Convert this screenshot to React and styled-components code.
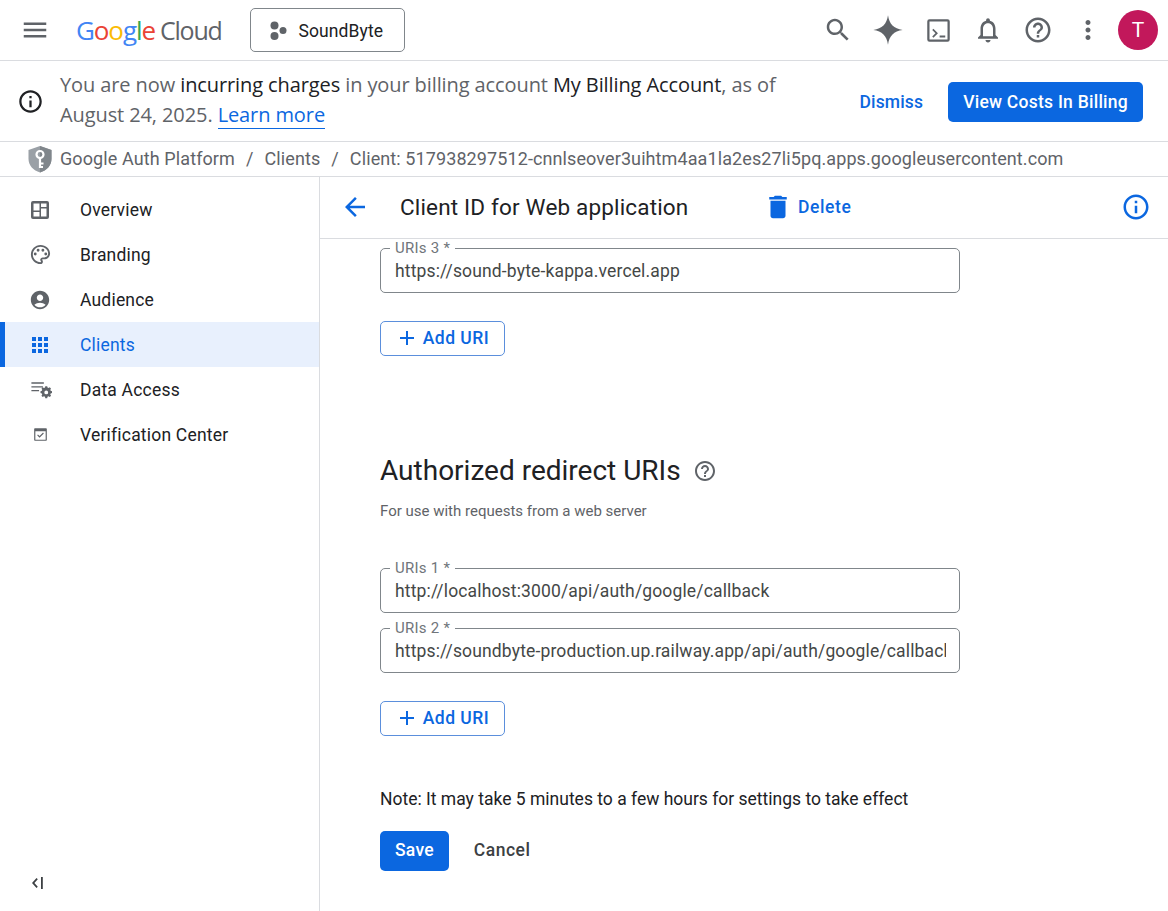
import React from 'react'
import styled, { createGlobalStyle } from 'styled-components'

const BLUE = '#0b67e0'

const paths = {
  menu: 'M3 18h18v-2H3v2zm0-5h18v-2H3v2zm0-7v2h18V6H3z',
  search: 'M15.5 14h-.79l-.28-.27C15.41 12.59 16 11.11 16 9.5 16 5.91 13.09 3 9.5 3S3 5.91 3 9.5 5.91 16 9.5 16c1.61 0 3.09-.59 4.23-1.57l.27.28v.79l5 4.99L20.49 19l-4.99-5zm-6 0C7.01 14 5 11.99 5 9.5S7.01 5 9.5 5 14 7.01 14 9.5 11.99 14 9.5 14z',
  bell: 'M12 22c1.1 0 2-.9 2-2h-4c0 1.1.9 2 2 2zm6-6v-5c0-3.07-1.63-5.64-4.5-6.32V4c0-.83-.67-1.5-1.5-1.5s-1.5.67-1.5 1.5v.68C7.64 5.36 6 7.92 6 11v5l-2 2v1h16v-1l-2-2zm-2 1H8v-6c0-2.48 1.51-4.5 4-4.5s4 2.02 4 4.5v6z',
  help: 'M11 18h2v-2h-2v2zm1-16C6.48 2 2 6.48 2 12s4.48 10 10 10 10-4.48 10-10S17.52 2 12 2zm0 18c-4.41 0-8-3.59-8-8s3.59-8 8-8 8 3.59 8 8-3.59 8-8 8zm0-14c-2.21 0-4 1.79-4 4h2c0-1.1.9-2 2-2s2 .9 2 2c0 2-3 1.75-3 5h2c0-2.25 3-2.5 3-5 0-2.21-1.79-4-4-4z',
  more: 'M12 8c1.1 0 2-.9 2-2s-.9-2-2-2-2 .9-2 2 .9 2 2 2zm0 2c-1.1 0-2 .9-2 2s.9 2 2 2 2-.9 2-2-.9-2-2-2zm0 6c-1.1 0-2 .9-2 2s.9 2 2 2 2-.9 2-2-.9-2-2-2z',
  info: 'M11 7h2v2h-2zm0 4h2v6h-2zm1-9C6.48 2 2 6.48 2 12s4.48 10 10 10 10-4.48 10-10S17.52 2 12 2zm0 18c-4.41 0-8-3.59-8-8s3.59-8 8-8 8 3.59 8 8-3.59 8-8 8z',
  back: 'M20 11H7.83l5.59-5.59L12 4l-8 8 8 8 1.41-1.41L7.83 13H20v-2z',
  trash: 'M6 19c0 1.1.9 2 2 2h8c1.1 0 2-.9 2-2V7H6v12zM19 4h-3.5l-1-1h-5l-1 1H5v2h14V4z',
  add: 'M19 13h-6v6h-2v-6H5v-2h6V5h2v6h6v2z',
  spark: 'M12 1c.9 6.6 4.4 10.100 11 11-6.600.9-10.100 4.400-11 11-.9-6.600-4.400-10.100-11-11 6.600-.9 10.100-4.400 11-11z',
  terminal: 'M20 2H4a2 2 0 0 0-2 2v16a2 2 0 0 0 2 2h16a2 2 0 0 0 2-2V4a2 2 0 0 0-2-2zm0 18H4V4h16v16zM7.500 10.500 6.400 11.600l2.900 2.900-2.900 2.900 1.100 1.100 4-4zM13 16.500h5v1.800h-5z',
  overview: 'M19 3H5a2 2 0 0 0-2 2v14a2 2 0 0 0 2 2h14a2 2 0 0 0 2-2V5a2 2 0 0 0-2-2zM5.500 5.500h6v7h-6zM5.500 14h6v4.500h-6zM13 5.500h5.500V9H13zM13 10.500h5.500v8H13z',
  palette: 'M12 22C6.49 22 2 17.51 2 12S6.49 2 12 2s10 4.040 10 9c0 3.310-2.690 6-6 6h-1.770c-.28 0-.5.22-.5.5 0 .12.05.23.13.33.41.47.64 1.060.64 1.670 0 1.380-1.120 2.500-2.500 2.500zm0-18c-4.410 0-8 3.590-8 8s3.590 8 8 8c.28 0 .5-.22.5-.5 0-.16-.08-.28-.14-.35-.41-.46-.63-1.050-.63-1.650 0-1.380 1.120-2.500 2.500-2.500H16c2.210 0 4-1.790 4-4 0-3.860-3.590-7-8-7zM6.500 10a1.500 1.500 0 1 0 0 3 1.500 1.500 0 0 0 0-3zM9.500 6a1.500 1.500 0 1 0 0 3 1.500 1.500 0 0 0 0-3zM14.500 6a1.500 1.500 0 1 0 0 3 1.500 1.500 0 0 0 0-3zM17.500 10a1.500 1.500 0 1 0 0 3 1.500 1.500 0 0 0 0-3z',
  account: 'M12 2C6.48 2 2 6.48 2 12s4.480 10 10 10 10-4.480 10-10S17.520 2 12 2zm0 4c1.930 0 3.500 1.570 3.500 3.500S13.930 13 12 13s-3.500-1.570-3.500-3.500S10.070 6 12 6zm0 14c-2.030 0-4.430-.82-6.140-2.880C7.550 15.800 9.680 15 12 15s4.450.8 6.140 2.120C16.430 19.180 14.030 20 12 20z',
  apps: 'M4 4h4v4H4zM10 4h4v4h-4zM16 4h4v4h-4zM4 10h4v4H4zM10 10h4v4h-4zM16 10h4v4h-4zM4 16h4v4H4zM10 16h4v4h-4zM16 16h4v4h-4z',
  dataAccess: 'M2.500 4.500h13v1.400h-13zM2.500 8.500h12v1.400h-12zM2.500 12.500h8v1.400h-8zM17 8.500h2l.3 1.500 1.100.5 1.300-.8 1.300 1.400-.8 1.200.4 1.100 1.400.4v1.900l-1.400.4-.4 1.100.8 1.200-1.300 1.400-1.300-.8-1.100.5-.3 1.500h-2l-.3-1.500-1.100-.5-1.300.8-1.300-1.400.8-1.200-.4-1.100-1.400-.4v-1.900l1.400-.4.4-1.100-.8-1.200 1.300-1.400 1.300.8 1.100-.5zM18 13a2 2 0 1 0 0 4 2 2 0 0 0 0-4z',
  verify: 'M19 4H5a1 1 0 0 0-1 1v14a1 1 0 0 0 1 1h14a1 1 0 0 0 1-1V5a1 1 0 0 0-1-1zm-.5 14.500h-13V8h13v10.500zM10.800 16l-3-3 1-1 2 2 4.400-4.400 1 1-5.400 5.400z',
  collapse: 'M10.500 7 6 12l4.500 5 1.300-1.200L8.400 12l3.400-3.800zM15 6h1.800v12H15z',
}

const Icon = ({ name, size = 24, color = '#5f6368' }) => (
  <svg width={size} height={size} viewBox="0 0 24 24" fill={color} aria-hidden="true">
    <path d={paths[name]} fillRule="evenodd" />
  </svg>
)

const ProjectDots = () => (
  <svg width="20" height="20" viewBox="0 0 20 20" fill="#5f6368" aria-hidden="true">
    <circle cx="6.500" cy="4.500" r="4" />
    <circle cx="6.500" cy="15" r="4" />
    <circle cx="15" cy="9.500" r="3.500" />
  </svg>
)

const ShieldKey = () => (
  <svg width="26" height="28" viewBox="0 0 26 28" aria-hidden="true">
    <path d="M13 1 24.500 5v9c0 6.500-4.800 11.500-11.500 13.500C6.300 25.500 1.500 20.500 1.500 14V5z" fill="#9aa0a6" />
    <path d="M13 1 24.500 5v9c0 6.500-4.800 11.500-11.500 13.500z" fill="#80868b" />
    <circle cx="13" cy="9.500" r="3.500" fill="none" stroke="#fff" strokeWidth="2.200" />
    <path d="M13 13v10M13 18.500h3.500M13 22h3" stroke="#fff" strokeWidth="2.200" fill="none" />
  </svg>
)

const GlobalStyle = createGlobalStyle`
  html, body {
    margin: 0;
    padding: 0;
    background: #fff;
    font-family: Roboto, "Liberation Sans", sans-serif;
    color: #202124;
  }
  * { box-sizing: border-box; }
`

const Page = styled.div`
  height: 911px;
  display: flex;
  flex-direction: column;
  overflow: hidden;
`
const Header = styled.header`
  height: 61px;
  flex: none;
  display: flex;
  align-items: center;
  border-bottom: 1px solid #dadce0;
  padding-right: 10px;
`
const MenuButton = styled.div`
  width: 70px;
  display: flex;
  justify-content: center;
  svg { width: 30px; height: 30px; }
`
const Logo = styled.div`
  width: 180px;
  flex: none;
  margin-left: 6px;
  margin-right: -6px;
  font-family: "Open Sans", sans-serif;
  font-size: 26px;
  font-weight: 500;
  letter-spacing: -1.1px;
  white-space: nowrap;
  color: #5f6368;
`
const Letter = styled.span`
  color: ${p => p.$color};
`
const CloudWord = styled.span`
  margin-left: 5px;
  font-size: 25px;
  font-weight: 400;
  letter-spacing: -1.2px;
`
const ProjectButton = styled.div`
  width: 155px;
  height: 44px;
  display: flex;
  align-items: center;
  gap: 10.500px;
  padding: 1px 0 0 17px;
  border: 1px solid #80868b;
  border-radius: 5px;
  font-size: 17.5px;
  letter-spacing: 0.1px;
  color: #202124;
`
const HeaderIcons = styled.div`
  margin-left: auto;
  display: flex;
  align-items: center;
`
const HeaderIconCell = styled.div`
  width: 50px;
  height: 50px;
  display: flex;
  align-items: center;
  justify-content: center;
`
const Avatar = styled.div`
  width: 40px;
  height: 40px;
  margin-left: 5px;
  border-radius: 50%;
  background: #c2185b;
  color: #fff;
  font-size: 21px;
  display: flex;
  align-items: center;
  justify-content: center;
`
const Banner = styled.section`
  height: 81px;
  flex: none;
  display: flex;
  align-items: center;
  padding: 0 25px 0 17px;
  border-bottom: 1px solid #dadce0;
`
const BannerIcon = styled.div`
  width: 43px;
  flex: none;
  display: flex;
  svg { width: 27px; height: 27px; }
`
const BannerText = styled.div`
  width: 740px;
  padding-bottom: 2px;
  font-family: "Open Sans", sans-serif;
  font-size: 20px;
  line-height: 30px;
  letter-spacing: -0.1px;
  color: #5f6368;
`
const Strong = styled.span`
  color: #202124;
`
const BannerLink = styled.a`
  color: ${BLUE};
  border-bottom: 1px solid ${BLUE};
`
const BannerActions = styled.div`
  margin-left: auto;
  padding-top: 1px;
  display: flex;
  align-items: center;
  gap: 25px;
`
const TextAction = styled.span`
  font-size: 17.5px;
  font-weight: 500;
  letter-spacing: ${p => p.$spacing || 0.15}px;
  color: ${BLUE};
`
const PrimaryButton = styled.button`
  height: 40px;
  padding: 0 15px ${p => p.$lift || 0}px;
  border: none;
  border-radius: 5px;
  background: ${BLUE};
  color: #fff;
  font-family: inherit;
  font-size: 17.5px;
  font-weight: 500;
  letter-spacing: 0.25px;
`
const Breadcrumbs = styled.nav`
  height: 35px;
  flex: none;
  display: flex;
  align-items: center;
  padding-left: 27px;
  border-bottom: 1px solid #dadce0;
  font-size: 18px;
  letter-spacing: 0.1px;
  color: #5f6368;
  white-space: nowrap;
`
const Crumbs = styled.div`
  margin: 0 0 2px 7px;
  display: flex;
  gap: 11px;
`
const Body = styled.div`
  flex: 1;
  min-height: 0;
  display: flex;
`
const Sidebar = styled.aside`
  width: 320px;
  flex: none;
  display: flex;
  flex-direction: column;
  padding-top: 10px;
  border-right: 1px solid #dadce0;
`
const NavItem = styled.div`
  height: 45px;
  display: flex;
  align-items: center;
  padding-left: ${p => (p.$active ? 25 : 30)}px;
  gap: 30px;
  font-size: 17.5px;
  letter-spacing: 0.2px;
  color: ${p => (p.$active ? BLUE : '#202124')};
  background: ${p => (p.$active ? '#e8f0fd' : 'transparent')};
  border-left: ${p => (p.$active ? `5px solid ${BLUE}` : 'none')};
`
const NavIcon = styled.div`
  width: 20px;
  height: 20px;
  display: flex;
  align-items: center;
  justify-content: center;
  svg { width: ${p => p.$size}px; height: ${p => p.$size}px; flex: none; }
`
const Collapse = styled.div`
  margin-top: auto;
  padding: 0 0 16px 26px;
  display: flex;
`
const Main = styled.main`
  flex: 1;
  min-width: 0;
  display: flex;
  flex-direction: column;
`
const Toolbar = styled.div`
  height: 62px;
  flex: none;
  display: flex;
  align-items: center;
  padding: 0 17px 1px 20px;
  border-bottom: 1px solid #dadce0;
  svg { flex: none; }
`
const Title = styled.h1`
  width: 363px;
  margin: 0 0 0 30px;
  font-size: 22.5px;
  font-weight: 400;
  letter-spacing: 0.17px;
  color: #202124;
`
const DeleteAction = styled.div`
  display: flex;
  align-items: center;
  gap: 5px;
`
const ToolbarInfo = styled.div`
  margin-left: auto;
  display: flex;
`
const Content = styled.div`
  flex: 1;
  padding: 9px 0 0 60px;
  display: flex;
  flex-direction: column;
  align-items: flex-start;
`
const Field = styled.div`
  position: relative;
  width: 580px;
  height: 45px;
  margin-bottom: ${p => p.$gap || 0}px;
`
const FieldLabel = styled.label`
  position: absolute;
  top: -9px;
  left: 10px;
  padding: 0 5px;
  background: #fff;
  font-size: 15px;
  line-height: 18px;
  letter-spacing: 0.25px;
  color: #70757a;
`
const FieldInput = styled.input`
  width: 100%;
  height: 100%;
  padding: 0 13px 0 14px;
  border: 1px solid #80868b;
  border-radius: 5px;
  outline: none;
  background: #fff;
  font-family: Roboto, sans-serif;
  font-size: 17.5px;
  letter-spacing: 0.15px;
  color: #444746;
`
const AddButton = styled.button`
  height: 35px;
  width: 125px;
  margin-top: 28px;
  display: flex;
  align-items: center;
  justify-content: center;
  gap: 4px;
  padding: 0 1px 2px 0;
  background: #fff;
  border: 1px solid #5b8fdc;
  border-radius: 5px;
  color: ${BLUE};
  font-family: inherit;
  font-size: 17.5px;
  font-weight: 500;
  letter-spacing: 0.5px;
`
const SectionHead = styled.div`
  margin-top: 96px;
  display: flex;
  align-items: center;
  gap: 12px;
`
const SectionTitle = styled.h2`
  margin: 0;
  font-size: 28px;
  line-height: 38px;
  font-weight: 400;
  color: #202124;
`
const SectionHint = styled.p`
  margin: 12px 0 48px;
  font-size: 15px;
  line-height: 18px;
  color: #5f6368;
`
const Note = styled.p`
  margin: 52px 0 0;
  font-size: 17.5px;
  line-height: 22px;
  color: #202124;
`
const FormActions = styled.div`
  margin-top: 21px;
  display: flex;
  align-items: center;
  gap: 25px;
`
const CancelButton = styled.span`
  padding-bottom: 2px;
  font-size: 17.5px;
  font-weight: 500;
  letter-spacing: 0.5px;
  color: #3c4043;
`

const navItems = [
  { label: 'Overview', icon: 'overview', size: 24 },
  { label: 'Branding', icon: 'palette', size: 23 },
  { label: 'Audience', icon: 'account', size: 22 },
  { label: 'Clients', icon: 'apps', size: 24, active: true },
  { label: 'Data Access', icon: 'dataAccess', size: 23 },
  { label: 'Verification Center', icon: 'verify', size: 19 },
]

const headerIcons = [
  { name: 'search', size: 30 },
  { name: 'spark', size: 32 },
  { name: 'terminal', size: 27 },
  { name: 'bell', size: 30 },
  { name: 'help', size: 30 },
  { name: 'more', size: 30 },
]

const googleLetters = [
  ['G', '#4285f4'],
  ['o', '#ea4335'],
  ['o', '#fbbc05'],
  ['g', '#4285f4'],
  ['l', '#34a853'],
  ['e', '#ea4335'],
]

const UriField = ({ label, value, gap }) => (
  <Field $gap={gap}>
    <FieldLabel>{label}</FieldLabel>
    <FieldInput value={value} readOnly />
  </Field>
)

const AddUri = () => (
  <AddButton>
    <Icon name="add" size={24} color={BLUE} />
    Add URI
  </AddButton>
)

export default function App() {
  return (
    <Page>
      <GlobalStyle />
      <Header>
        <MenuButton><Icon name="menu" /></MenuButton>
        <Logo>
          {googleLetters.map(([ch, color], i) => <Letter key={i} $color={color}>{ch}</Letter>)}
          <CloudWord>Cloud</CloudWord>
        </Logo>
        <ProjectButton>
          <ProjectDots />
          SoundByte
        </ProjectButton>
        <HeaderIcons>
          {headerIcons.map(({ name, size }) => (
            <HeaderIconCell key={name}>
              <Icon name={name} size={size} />
            </HeaderIconCell>
          ))}
          <Avatar>T</Avatar>
        </HeaderIcons>
      </Header>

      <Banner>
        <BannerIcon><Icon name="info" color="#202124" /></BannerIcon>
        <BannerText>
          You are now <Strong>incurring charges</Strong> in your billing account <Strong>My Billing Account</Strong>, as of August 24, 2025. <BannerLink>Learn more</BannerLink>
        </BannerText>
        <BannerActions>
          <TextAction>Dismiss</TextAction>
          <PrimaryButton>View Costs In Billing</PrimaryButton>
        </BannerActions>
      </Banner>

      <Breadcrumbs>
        <ShieldKey />
        <Crumbs>
          <span>Google Auth Platform</span>
          <span>/</span>
          <span>Clients</span>
          <span>/</span>
          <span>Client: 517938297512-cnnlseover3uihtm4aa1la2es27li5pq.apps.googleusercontent.com</span>
        </Crumbs>
      </Breadcrumbs>

      <Body>
        <Sidebar>
          {navItems.map(item => (
            <NavItem key={item.label} $active={item.active}>
              <NavIcon $size={item.size}>
                <Icon name={item.icon} color={item.active ? BLUE : '#5f6368'} />
              </NavIcon>
              {item.label}
            </NavItem>
          ))}
          <Collapse><Icon name="collapse" color="#3c4043" /></Collapse>
        </Sidebar>

        <Main>
          <Toolbar>
            <Icon name="back" size={30} color={BLUE} />
            <Title>Client ID for Web application</Title>
            <DeleteAction>
              <Icon name="trash" size={30} color={BLUE} />
              <TextAction $spacing={0.6}>Delete</TextAction>
            </DeleteAction>
            <ToolbarInfo><Icon name="info" size={30} color={BLUE} /></ToolbarInfo>
          </Toolbar>
          <Content>
            <UriField label="URIs 3 *" value="https://sound-byte-kappa.vercel.app" />
            <AddUri />
            <SectionHead>
              <SectionTitle>Authorized redirect URIs</SectionTitle>
              <Icon name="help" size={24} />
            </SectionHead>
            <SectionHint>For use with requests from a web server</SectionHint>
            <UriField label="URIs 1 *" value="http://localhost:3000/api/auth/google/callback" gap={15} />
            <UriField label="URIs 2 *" value="https://soundbyte-production.up.railway.app/api/auth/google/callback" />
            <AddUri />
            <Note>Note: It may take 5 minutes to a few hours for settings to take effect</Note>
            <FormActions>
              <PrimaryButton $lift={2}>Save</PrimaryButton>
              <CancelButton>Cancel</CancelButton>
            </FormActions>
          </Content>
        </Main>
      </Body>
    </Page>
  )
}
